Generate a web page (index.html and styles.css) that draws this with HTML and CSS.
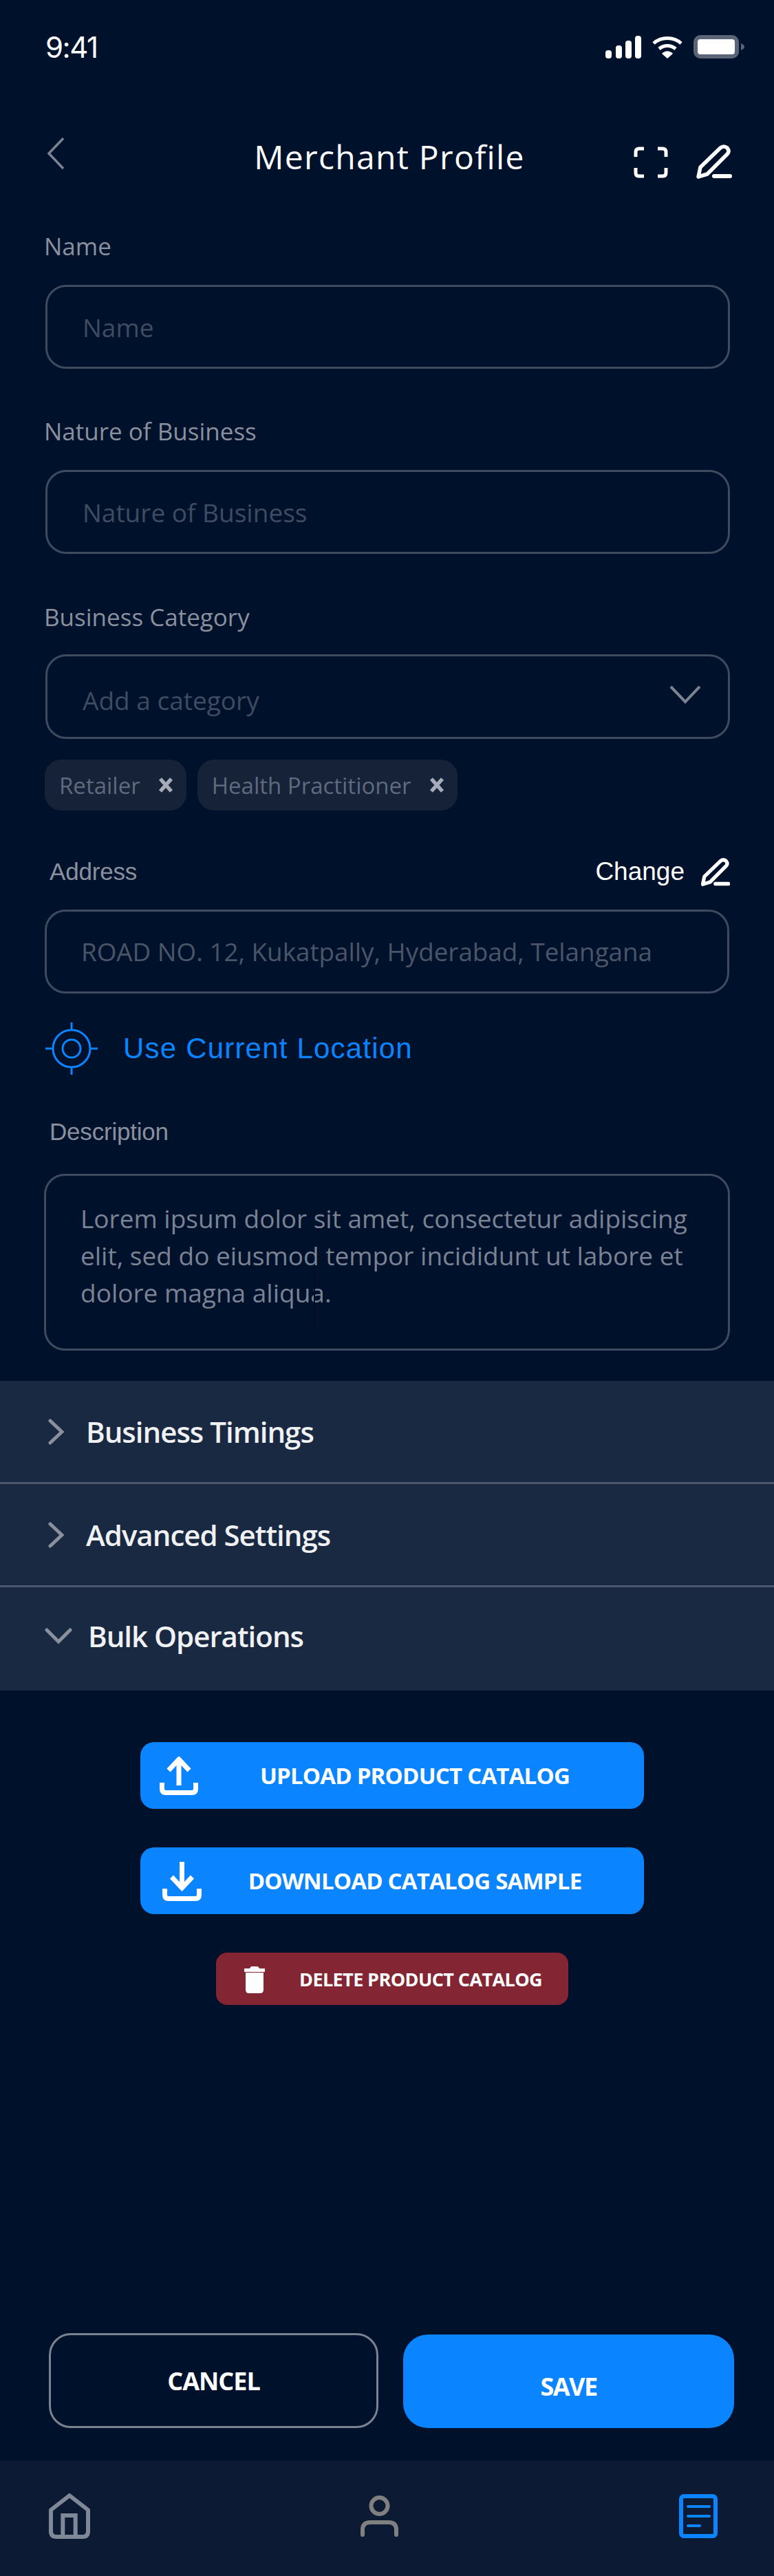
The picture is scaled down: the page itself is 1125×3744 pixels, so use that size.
FILE: index.html
```html
<!DOCTYPE html>
<html lang="en">
<head>
  <meta charset="UTF-8">
  <meta name="viewport" content="width=device-width, initial-scale=1.0">
  <title>Merchant Profile</title>
  <link rel="stylesheet" href="styles.css">
</head>
<body>
  <div class="page">
    <div class="status-bar">
      <span class="status-time">9:41</span>
      <div class="status-icons">
        <svg width="52" height="33" viewBox="0 0 52 33"><rect x="0" y="21" width="9" height="12" rx="4" fill="#fff"/><rect x="15" y="14" width="9" height="19" rx="4" fill="#fff"/><rect x="29" y="7" width="9" height="26" rx="4" fill="#fff"/><rect x="43" y="0" width="9" height="33" rx="4" fill="#fff"/></svg>
        <svg width="46" height="33" viewBox="0 0 46 33"><path d="M3 11 C14 1 32 1 43 11 M11 19 C18 13 28 13 35 19" fill="none" stroke="#fff" stroke-width="5"/><path d="M15 26 C20 21 26 21 31 26 L23 33 Z" fill="#fff"/></svg>
        <svg width="74" height="34" viewBox="0 0 74 34"><rect x="3" y="3" width="60" height="28" rx="7" fill="#fff" stroke="#5b6577" stroke-width="6"/><path d="M69 12 C72 13 74 15 74 17 C74 19 72 21 69 22 Z" fill="#5b6577"/></svg>
      </div>
    </div>

    <header class="top-bar">
      <svg class="back-icon" width="26" height="46" viewBox="0 0 26 46"><path d="M24 1 L3 23 L24 45" fill="none" stroke="#7b8290" stroke-width="3.5"/></svg>
      <h1 class="title">Merchant Profile</h1>
      <div class="top-actions">
        <svg class="scan-icon" width="50" height="46" viewBox="0 0 50 46"><path d="M15 3 H8 Q3 3 3 8 V15 M35 3 H42 Q47 3 47 8 V15 M15 43 H8 Q3 43 3 38 V31 M35 43 H42 Q47 43 47 38 V31" fill="none" stroke="#fff" stroke-width="5"/></svg>
        <svg width="52" height="50" viewBox="0 0 52 50"><path d="M3 47 L6 33 L35 5 Q40 1 45 5 Q49 10 45 14 L16 43 Z" fill="none" stroke="#fff" stroke-width="5.5" stroke-linejoin="round"/><path d="M26 46 H49" stroke="#fff" stroke-width="6" stroke-linecap="round"/></svg>
      </div>
    </header>

    <form class="form">
      <div class="field">
        <label class="label">Name</label>
        <div class="input placeholder">Name</div>
      </div>
      <div class="field">
        <label class="label">Nature of Business</label>
        <div class="input placeholder">Nature of Business</div>
      </div>
      <div class="field field-category">
        <label class="label">Business Category</label>
        <div class="input placeholder select">
          <span class="select-text">Add a category</span>
          <svg width="48" height="28" viewBox="0 0 48 28"><path d="M3 3 L24 25 L45 3" fill="none" stroke="#7b8290" stroke-width="4"/></svg>
        </div>
        <div class="chips">
          <span class="chip">Retailer <svg width="22" height="22" viewBox="0 0 22 22"><path d="M3 2 L19 20 M19 2 L3 20" stroke="#a7adb8" stroke-width="5.5"/></svg></span>
          <span class="chip">Health Practitioner <svg width="22" height="22" viewBox="0 0 22 22"><path d="M3 2 L19 20 M19 2 L3 20" stroke="#a7adb8" stroke-width="5.5"/></svg></span>
        </div>
      </div>
      <div class="field field-address">
        <div class="label-row">
          <label class="label label-arial">Address</label>
          <span class="change">Change
            <svg width="42" height="41" viewBox="0 0 52 50"><path d="M3 47 L6 33 L35 5 Q40 1 45 5 Q49 10 45 14 L16 43 Z" fill="none" stroke="#fff" stroke-width="6.5" stroke-linejoin="round"/><path d="M26 46 H49" stroke="#fff" stroke-width="7" stroke-linecap="round"/></svg>
          </span>
        </div>
        <div class="input placeholder address-input">ROAD NO. 12, Kukatpally, Hyderabad, Telangana</div>
      </div>
      <div class="location">
        <svg width="76" height="76" viewBox="0 0 76 76"><circle cx="38" cy="38" r="27" fill="none" stroke="#0a84ff" stroke-width="3"/><circle cx="38" cy="38" r="13" fill="none" stroke="#0a84ff" stroke-width="3"/><path d="M38 0 V11 M38 65 V76 M0 38 H11 M65 38 H76" stroke="#0a84ff" stroke-width="3"/></svg>
        <span>Use Current Location</span>
      </div>
      <div class="field field-description">
        <label class="label label-arial">Description</label>
        <div class="textarea">Lorem ipsum dolor sit amet, consectetur adipiscing elit, sed do eiusmod tempor incididunt ut labore et dolore magna aliqua.</div>
      </div>
    </form>

    <section class="accordion">
      <div class="acc-row">
        <svg width="23" height="38" viewBox="0 0 23 38"><path d="M3 3 L20 19 L3 35" fill="none" stroke="#8b919c" stroke-width="5" stroke-linecap="round"/></svg>
        <span>Business Timings</span>
      </div>
      <div class="acc-row">
        <svg width="23" height="38" viewBox="0 0 23 38"><path d="M3 3 L20 19 L3 35" fill="none" stroke="#8b919c" stroke-width="5" stroke-linecap="round"/></svg>
        <span>Advanced Settings</span>
      </div>
      <div class="acc-row acc-open">
        <svg width="40" height="25" viewBox="0 0 40 25"><path d="M3 4 L20 21 L37 4" fill="none" stroke="#8b919c" stroke-width="5" stroke-linecap="round"/></svg>
        <span>Bulk Operations</span>
      </div>
    </section>

    <div class="bulk-actions">
      <button class="bulk-btn" type="button">
        <svg class="upload-icon" width="56" height="56" viewBox="0 0 56 56"><path d="M28 42 V4 M13 20 L28 4 L43 20" fill="none" stroke="#fff" stroke-width="7"/><path d="M3.5 38 V47 Q3.5 52.5 9 52.5 H47 Q52.5 52.5 52.5 47 V38" fill="none" stroke="#fff" stroke-width="7"/></svg>
        <span>UPLOAD PRODUCT CATALOG</span>
      </button>
      <button class="bulk-btn" type="button">
        <svg class="download-icon" width="57" height="57" viewBox="0 0 57 57"><path d="M28.5 0 V37 M13.5 22 L28.5 38 L43.5 22" fill="none" stroke="#fff" stroke-width="7"/><path d="M3.5 39 V48 Q3.5 53.5 9 53.5 H48 Q53.5 53.5 53.5 48 V39" fill="none" stroke="#fff" stroke-width="7"/></svg>
        <span>DOWNLOAD CATALOG SAMPLE</span>
      </button>
      <button class="bulk-btn delete-btn" type="button">
        <svg width="30" height="39" viewBox="0 0 30 39"><path d="M8 3 Q9 0 11 0 H19 Q21 0 22 3 H30 V8 H0 V3 Z M2 9 H28 V34 Q28 39 23 39 H7 Q2 39 2 34 Z" fill="#fff"/></svg>
        <span>DELETE PRODUCT CATALOG</span>
      </button>
    </div>

    <div class="footer-actions">
      <button class="btn-cancel" type="button">CANCEL</button>
      <button class="btn-save" type="button">SAVE</button>
    </div>

    <nav class="tab-bar">
      <svg width="60" height="66" viewBox="0 0 60 66"><path d="M3 24 L30 3 L57 24 V55 Q57 63 49 63 H11 Q3 63 3 55 Z" fill="none" stroke="#7f8896" stroke-width="6" stroke-linejoin="round"/><path d="M20.3 63 V32 H38.7 V63" fill="none" stroke="#7f8896" stroke-width="6"/></svg>
      <svg class="tab-person" width="55" height="60" viewBox="0 0 55 60"><circle cx="27.5" cy="15" r="12" fill="none" stroke="#808080" stroke-width="6"/><path d="M3 57 V50 Q3 39 14 39 H41 Q52 39 52 50 V57" fill="none" stroke="#808080" stroke-width="6" stroke-linecap="round"/></svg>
      <svg width="56" height="64" viewBox="0 0 56 64"><rect x="3" y="3" width="50" height="58" rx="4" fill="none" stroke="#0a84ff" stroke-width="6"/><path d="M13 18 H44 M13 32 H44 M13 46 H30" stroke="#0a84ff" stroke-width="4" stroke-linecap="round"/></svg>
    </nav>
  </div>
</body>
</html>
```

FILE: styles.css
```css
* {
  box-sizing: border-box;
}
body {
  margin: 0;
  background: #00112b;
  font-family: "Open Sans", sans-serif;
  color: #fff;
}
button {
  font-family: inherit;
  border: 0;
  padding: 0;
  cursor: pointer;
}
.page {
  width: 1125px;
  height: 3744px;
  display: flex;
  flex-direction: column;
}
.status-bar {
  height: 90px;
  padding: 46px 43px 0 66px;
  display: flex;
  justify-content: space-between;
  align-items: center;
}
.status-time {
  font-family: Inter, sans-serif;
  font-size: 42px;
  letter-spacing: -1.5px;
}
.status-icons {
  display: flex;
  align-items: center;
  gap: 15px;
}
.top-bar {
  height: 100px;
  margin-top: 89px;
  padding: 0 61px 0 68px;
  display: grid;
  grid-template-columns: 1fr auto 1fr;
  align-items: start;
}
.back-icon {
  margin-top: 21px;
}
.title {
  margin: 19px 0 0;
  font-size: 48px;
  line-height: 60px;
  font-weight: 400;
  letter-spacing: 1.3px;
}
.top-actions {
  justify-self: end;
  margin-top: 31px;
  display: flex;
  align-items: flex-start;
  gap: 41px;
}
.scan-icon {
  margin-top: 3px;
}
.form {
  padding: 54px 64px 0 66px;
  display: flex;
  flex-direction: column;
}
.field {
  display: flex;
  flex-direction: column;
}
.field + .field {
  margin-top: 66px;
}
.label {
  margin-left: -2px;
  margin-bottom: 31px;
  font-size: 35px;
  line-height: 50px;
  color: #8a909e;
}
.label-arial {
  font-family: "Liberation Sans", sans-serif;
  margin: 0;
  padding-left: 6px;
  letter-spacing: -0.2px;
}
.input {
  height: 122px;
  border: 3px solid #3e4a5e;
  border-radius: 30px;
  padding: 0 51px;
  display: flex;
  align-items: center;
}
.placeholder {
  font-size: 37px;
  color: #3f4b60;
}
.field.field-category {
  margin-top: 67px;
}
.field-category .label {
  margin-bottom: 29px;
}
.select {
  height: 123px;
  justify-content: space-between;
  padding-right: 38px;
}
.select-text {
  padding-top: 10px;
}
.select svg {
  margin-top: -8px;
}
.chips {
  display: flex;
  gap: 16px;
  margin-top: 30px;
  margin-left: -1px;
}
.chip {
  height: 74px;
  padding: 0 19px 0 21px;
  display: flex;
  align-items: center;
  gap: 26px;
  background: #152238;
  border-radius: 24px;
  font-size: 33px;
  color: #5f6a7d;
}
.field.field-address {
  margin-top: 64px;
}
.label-row {
  display: flex;
  justify-content: space-between;
  align-items: center;
  margin-bottom: 30px;
}
.change {
  font-family: "Liberation Sans", sans-serif;
  font-size: 37px;
  display: flex;
  align-items: center;
  gap: 24px;
}
.address-input {
  margin: 0 1px 0 -1px;
  padding-left: 50px;
  font-size: 36.8px;
  color: #4a5568;
}
.location {
  display: flex;
  align-items: center;
  gap: 37px;
  margin-top: 42px;
  font-family: "Liberation Sans", sans-serif;
  font-size: 42px;
  letter-spacing: 1.2px;
  color: #0a84ff;
}
.field.field-description {
  margin-top: 58px;
}
.field-description .label {
  margin-bottom: 36px;
}
.textarea {
  position: relative;
  height: 257px;
  margin-left: -2px;
  padding: 35px 50px 0;
  border: 3px solid #3e4a5e;
  border-radius: 30px;
  font-size: 37px;
  line-height: 54px;
  color: #7a8294;
}
/* faint text cursor left in the field */
.textarea::after {
  content: "";
  position: absolute;
  left: 389px;
  top: 132px;
  width: 2px;
  height: 91px;
  background: #000c20;
}
.accordion {
  margin-top: 44px;
  background: #1a2942;
}
.acc-row {
  height: 150px;
  padding-left: 70px;
  display: flex;
  align-items: center;
  gap: 32px;
  font-size: 42px;
  font-weight: 600;
  letter-spacing: -1px;
  color: #f0f1f3;
  border-bottom: 3px solid #4d586c;
}
.acc-open {
  border-bottom: 0;
  padding-left: 65px;
  padding-bottom: 9px;
  gap: 23px;
}
.bulk-actions {
  margin-top: 75px;
  padding-left: 15px;
  display: flex;
  flex-direction: column;
  align-items: center;
  gap: 56px;
}
.bulk-btn {
  position: relative;
  width: 732px;
  height: 97px;
  background: #0a84ff;
  border-radius: 20px;
  color: #fff;
  font-size: 33px;
  font-weight: 700;
  letter-spacing: -0.8px;
  display: flex;
  align-items: center;
  justify-content: center;
  padding-left: 66px;
}
.bulk-btn svg {
  position: absolute;
  left: 28px;
  top: 21px;
}
.bulk-btn .download-icon {
  left: 32px;
}
.delete-btn {
  width: 512px;
  height: 76px;
  background: #832532;
  font-size: 27px;
  letter-spacing: -0.6px;
  border-radius: 16px;
  padding-left: 83px;
}
.delete-btn svg {
  left: 41px;
  top: 20px;
}
.footer-actions {
  margin-top: auto;
  padding: 0 58px 47px 71px;
  display: flex;
  align-items: flex-end;
  gap: 36px;
}
.btn-cancel,
.btn-save {
  color: #fff;
  font-size: 36px;
  font-weight: 700;
}
.btn-cancel {
  width: 479px;
  height: 138px;
  border-radius: 32px;
  background: transparent;
  border: 3px solid #7b8290;
  letter-spacing: -1px;
}
.btn-save {
  width: 481px;
  height: 136px;
  border-radius: 36px;
  background: #0a84ff;
  padding-top: 14px;
  letter-spacing: -1.5px;
}
.tab-bar {
  height: 168px;
  background: #0c1b33;
  padding: 48px 82px 54px 71px;
  display: flex;
  justify-content: space-between;
  align-items: center;
}
.tab-person {
  margin-right: 16px;
}
```
